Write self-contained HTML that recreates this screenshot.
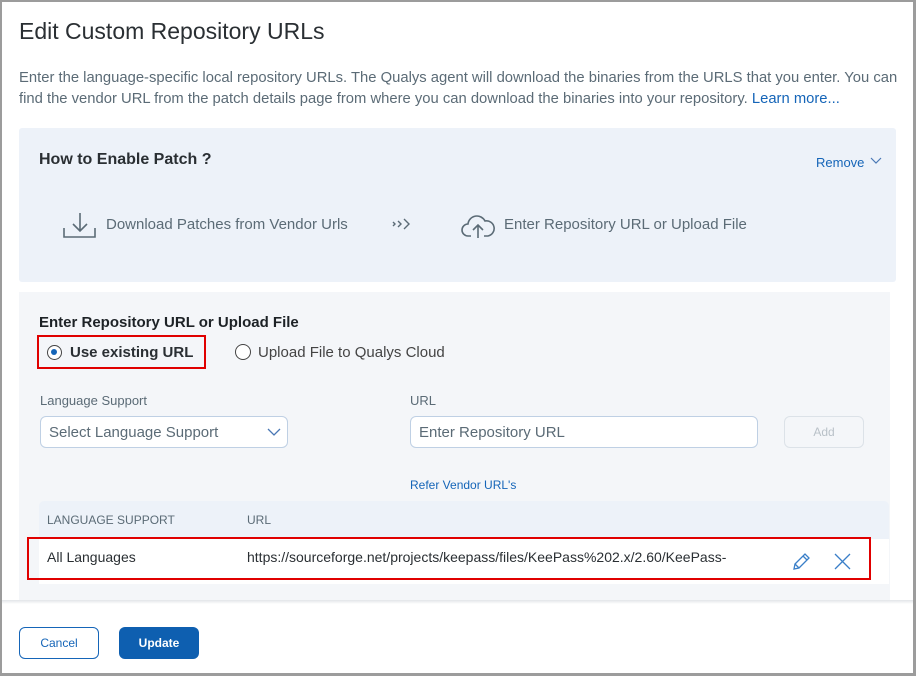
<!DOCTYPE html>
<html><head><style>
*{margin:0;padding:0;box-sizing:border-box}
body{width:916px;height:676px;position:relative;background:#fff;font-family:"Liberation Sans",Arial,sans-serif;overflow:hidden}
.frame{position:absolute;left:0;top:0;width:916px;height:676px;border:2px solid #9c9c9c;border-right-width:3px;border-bottom-width:3px}
.a{position:absolute;white-space:nowrap}
.t{color:#5b6b76}
</style></head><body>
<div class="frame"></div>
<div class="a" style="left:19px;top:18px;font-size:23px;color:#2a2f33">Edit Custom Repository URLs</div>
<div class="a t" style="left:19px;top:68px;font-size:14.8px;line-height:21px">Enter the language-specific local repository URLs. The Qualys agent will download the binaries from the URLS that you enter. You can<br>find the vendor URL from the patch details page from where you can download the binaries into your repository. <span style="color:#1565b8">Learn more...</span></div>

<div class="a" style="left:19px;top:128px;width:877px;height:154px;background:#edf2f9;border-radius:3px"></div>
<div class="a" style="left:39px;top:151px;font-size:16px;font-weight:bold;color:#2a2f33">How to Enable Patch ?</div>
<div class="a" style="left:816px;top:155px;font-size:13px;color:#1565b8">Remove</div>
<svg class="a" style="left:870px;top:157px" width="12" height="8"><path d="M1 1l5 5 5-5" fill="none" stroke="#4a78b5" stroke-width="1.2"/></svg>
<svg class="a" style="left:63px;top:211px" width="34" height="28"><path d="M1 17v9h31v-9M17 2v18M10 13l7 7 7-7" fill="none" stroke="#5b6b76" stroke-width="1.6"/></svg>
<div class="a t" style="left:106px;top:216px;font-size:15px">Download Patches from Vendor Urls</div>
<svg class="a" style="left:391px;top:217px" width="22" height="14"><path d="M2 5l2 2-2 2M7 4l3 3-3 3M13 2l5 5-5 5" fill="none" stroke="#5b6b76" stroke-width="1.4"/></svg>
<svg class="a" style="left:461px;top:211px" width="34" height="28"><path d="M10 25H7a6 6 0 0 1 0-12 9 9 0 0 1 17-3 7 7 0 0 1 3 15h-4M17 27V15M12 19l5-5 5 5" fill="none" stroke="#5b6b76" stroke-width="1.6"/></svg>
<div class="a t" style="left:504px;top:216px;font-size:15px">Enter Repository URL or Upload File</div>

<div class="a" style="left:19px;top:292px;width:871px;height:308px;background:#f4f6f9"></div>
<div class="a" style="left:39px;top:314px;font-size:15px;font-weight:bold;color:#1d2226">Enter Repository URL or Upload File</div>
<div class="a" style="left:37px;top:335px;width:169px;height:34px;border:2px solid #e00000"></div>
<div class="a" style="left:47px;top:345px;width:15px;height:15px;border:1.5px solid #444;border-radius:50%;background:#fff"><div style="position:absolute;left:3px;top:3px;width:6px;height:6px;border-radius:50%;background:#1565b8"></div></div>
<div class="a" style="left:70px;top:344px;font-size:15px;font-weight:bold;color:#2a2f33">Use existing URL</div>
<div class="a" style="left:235px;top:344px;width:16px;height:16px;border:1.5px solid #444;border-radius:50%;background:#fff"></div>
<div class="a t" style="left:258px;top:344px;font-size:15px;color:#444">Upload File to Qualys Cloud</div>

<div class="a t" style="left:40px;top:393px;font-size:13px">Language Support</div>
<div class="a" style="left:40px;top:416px;width:248px;height:32px;border:1px solid #bfd0e4;border-radius:6px;background:#fff"></div>
<div class="a t" style="left:49px;top:424px;font-size:15px">Select Language Support</div>
<svg class="a" style="left:267px;top:428px" width="14" height="9"><path d="M1 1l6 6 6-6" fill="none" stroke="#4a78b5" stroke-width="1.3"/></svg>
<div class="a t" style="left:410px;top:393px;font-size:13px">URL</div>
<div class="a" style="left:410px;top:416px;width:348px;height:32px;border:1px solid #bfd0e4;border-radius:6px;background:#fff"></div>
<div class="a t" style="left:419px;top:424px;font-size:15px">Enter Repository URL</div>
<div class="a" style="left:784px;top:416px;width:80px;height:32px;border:1px solid #dce2e8;border-radius:6px;font-size:12px;color:#b9c1c8;text-align:center;line-height:30px">Add</div>
<div class="a" style="left:410px;top:478px;font-size:12px;color:#1565b8">Refer Vendor URL's</div>

<div class="a" style="left:39px;top:501px;width:850px;height:38px;background:#edf2f9;border-radius:5px 5px 0 0"></div>
<div class="a t" style="left:47px;top:513px;font-size:12px">LANGUAGE SUPPORT</div>
<div class="a t" style="left:247px;top:513px;font-size:12px">URL</div>
<div class="a" style="left:39px;top:539px;width:850px;height:45px;background:#fff"></div>
<div class="a" style="left:27px;top:537px;width:844px;height:43px;border:2px solid #e00000"></div>
<div class="a" style="left:47px;top:549px;font-size:14px;color:#2a2f33">All Languages</div>
<div class="a" style="left:247px;top:549px;font-size:14px;color:#2a2f33">https://sourceforge.net/projects/keepass/files/KeePass%202.x/2.60/KeePass-</div>
<svg class="a" style="left:792px;top:551px" width="20" height="20"><path d="M2 18l1-5L13 3l4 4L7 17zM3 13l4 4M11 5l4 4" fill="none" stroke="#3a7fc8" stroke-width="1.3"/></svg>
<svg class="a" style="left:834px;top:553px" width="17" height="17"><path d="M1 1l15 15M16 1L1 16" stroke="#3a7fc8" stroke-width="1.3"/></svg>

<div class="a" style="left:2px;top:600px;width:911px;height:4px;background:linear-gradient(#e2e5e8,#fff)"></div>
<div class="a" style="left:19px;top:627px;width:80px;height:32px;border:1px solid #1565b8;border-radius:6px;font-size:12px;color:#1565b8;text-align:center;line-height:30px">Cancel</div>
<div class="a" style="left:119px;top:627px;width:80px;height:32px;background:#0e5fb0;border-radius:6px;font-size:12px;font-weight:bold;color:#fff;text-align:center;line-height:32px">Update</div>
</body></html>
